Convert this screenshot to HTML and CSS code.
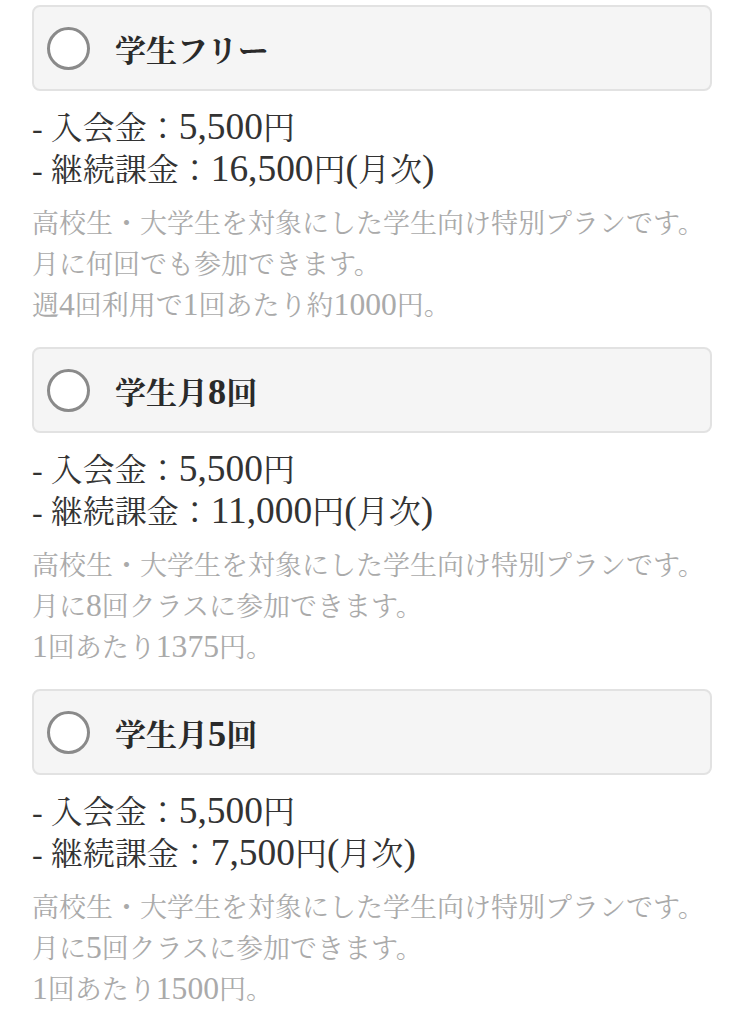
FILE: index.html
```html
<!DOCTYPE html>
<html lang="ja">
<head>
<meta charset="utf-8">
<link rel="stylesheet" href="styles.css">
</head>
<body>
<div class="plans">
  <section class="plan">
    <div class="option">
      <span class="radio"></span>
      <span class="title">学生フリー</span>
    </div>
    <ul class="fees">
      <li>- 入会金：<span class="num">5,500</span>円</li>
      <li>- 継続課金：<span class="num">16,500</span>円<span class="num">(</span>月次<span class="num">)</span></li>
    </ul>
    <p class="desc">高校生・大学生を対象にした学生向け特別プランです。<br>月に何回でも参加できます。<br>週<span class="num">4</span>回利用で<span class="num">1</span>回あたり約<span class="num">1000</span>円。</p>
  </section>
  <section class="plan">
    <div class="option">
      <span class="radio"></span>
      <span class="title">学生月<span class="num">8</span>回</span>
    </div>
    <ul class="fees">
      <li>- 入会金：<span class="num">5,500</span>円</li>
      <li>- 継続課金：<span class="num">11,000</span>円<span class="num">(</span>月次<span class="num">)</span></li>
    </ul>
    <p class="desc">高校生・大学生を対象にした学生向け特別プランです。<br>月に<span class="num">8</span>回クラスに参加できます。<br><span class="num">1</span>回あたり<span class="num">1375</span>円。</p>
  </section>
  <section class="plan">
    <div class="option">
      <span class="radio"></span>
      <span class="title">学生月<span class="num">5</span>回</span>
    </div>
    <ul class="fees">
      <li>- 入会金：<span class="num">5,500</span>円</li>
      <li>- 継続課金：<span class="num">7,500</span>円<span class="num">(</span>月次<span class="num">)</span></li>
    </ul>
    <p class="desc">高校生・大学生を対象にした学生向け特別プランです。<br>月に<span class="num">5</span>回クラスに参加できます。<br><span class="num">1</span>回あたり<span class="num">1500</span>円。</p>
  </section>
</div>
</body>
</html>
```
FILE: styles.css
```css
html, body {
  margin: 0;
  padding: 0;
  background: #ffffff;
}
body {
  font-family: "Liberation Serif", "Noto Serif CJK JP", "Noto Sans CJK JP", serif;
  color: #333333;
}
.plans {
  padding: 5px 33px 0 32px;
}
.plan {
  padding-bottom: 20px;
}
.option {
  box-sizing: border-box;
  height: 86px;
  background: #f5f5f5;
  border: 2px solid #e2e2e2;
  border-radius: 8px;
  display: flex;
  align-items: center;
  padding-left: 13px;
}
.radio {
  box-sizing: border-box;
  width: 43px;
  height: 43px;
  border-radius: 50%;
  border: 3px solid #8a8a8a;
  background: #ffffff;
  flex: none;
}
.title {
  margin-left: 25px;
  font-size: 31px;
  font-weight: bold;
  color: #2a2a2a;
}
.num {
  font-size: 1.17em;
  line-height: 0;
}
.fees {
  list-style: none;
  margin: 16px 0 0 0;
  padding: 0;
  font-size: 32px;
  line-height: 42px;
  color: #333333;
}
.fees li {
  height: 42px;
}
.desc {
  margin: 13px 0 0 0;
  font-size: 27px;
  line-height: 41px;
  color: #aaaaaa;
  white-space: nowrap;
}
```
